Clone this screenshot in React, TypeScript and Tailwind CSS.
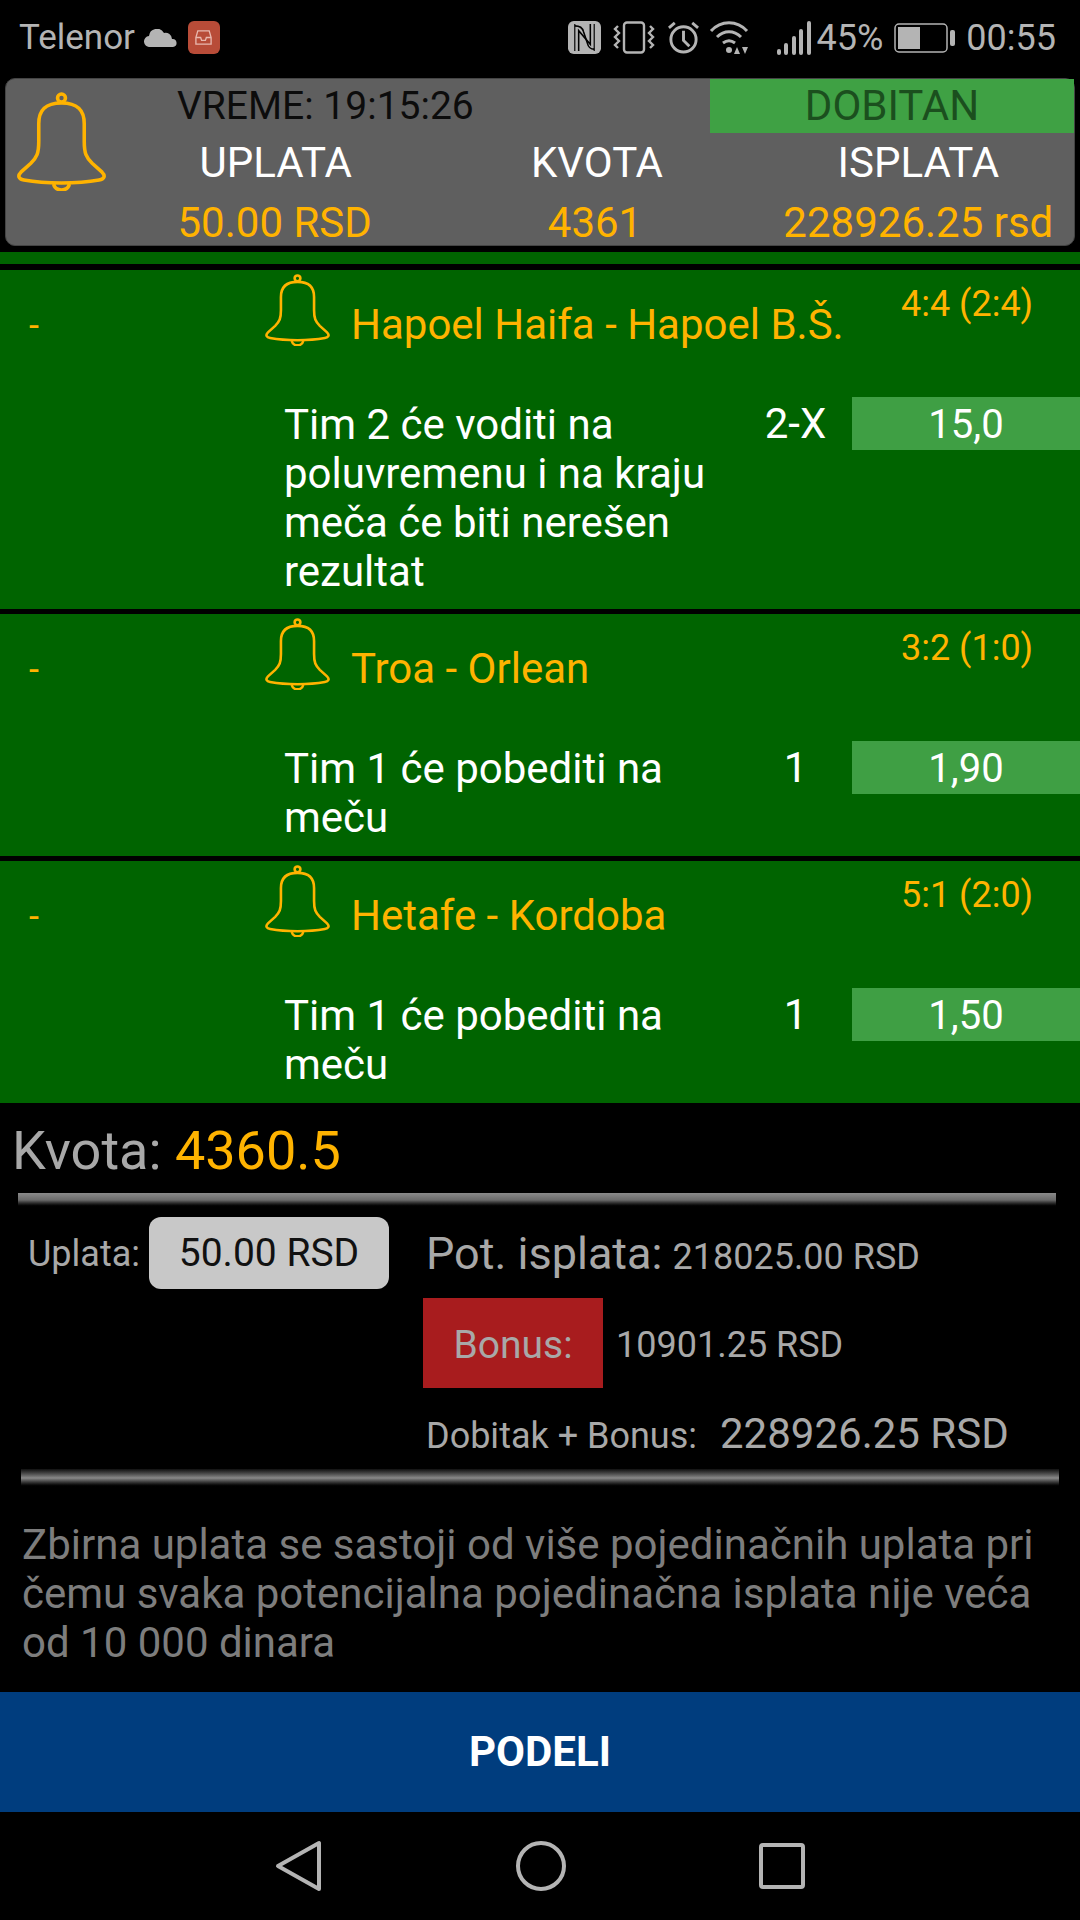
const font = { fontFamily: 'Roboto, sans-serif' };

function Bell({ className }: { className: string }) {
  return (
    <svg viewBox="0 0 90 100" className={className} fill="none" stroke="#ffb300" strokeWidth="3.6">
      <circle cx="45" cy="6" r="4" />
      <path d="M45 11C28 11 22 19 22 32V50C22 62 20 66 14 72L4 81C0 85 2 88 7 89 18 91 32 92 45 92 58 92 72 91 83 89 88 88 90 85 86 81L76 72C70 66 68 62 68 50V32C68 19 62 11 45 11Z" />
      <path d="M37 93c1 4 4 6 8 6s7-2 8-6" />
    </svg>
  );
}

function StatusBar() {
  return (
    <div className="flex items-center h-[75px] pl-[19px] pr-[24px] text-[#b4b4b4]">
      <span className="text-[35px] leading-none">Telenor</span>
      <svg viewBox="0 0 34 18" className="w-[34px] h-[18px] ml-[9px]" fill="#b4b4b4">
        <path d="M6 18a5.5 5.5 0 0 1-1-11 8 8 0 0 1 15-3 6.5 6.5 0 0 1 8 6 4 4 0 0 1 1 8z" />
      </svg>
      <div className="w-[32px] h-[33px] ml-[10px] rounded-[6px] bg-[#b84c38] flex items-center justify-center">
        <svg viewBox="0 0 20 20" className="w-[19px] h-[19px]" fill="none" stroke="#e8b8ae" strokeWidth="1.4">
          <path d="M4 3h12l2 7v7H2v-7z" />
          <path d="M2 10h5l1 3h4l1-3h5" />
        </svg>
      </div>
      <div className="flex-1" />
      <svg viewBox="0 0 34 34" className="w-[33px] h-[33px]">
        <rect width="34" height="34" rx="6" fill="#b4b4b4" />
        <path d="M7 3v28M27 3v28" stroke="#000" strokeWidth="1.2" />
        <path d="M7 5c5 0 8 2 9 6l4 12c1 4 4 6 7 6" fill="none" stroke="#000" strokeWidth="1.6" />
        <path d="M11 31V10l12 14V3" fill="none" stroke="#000" strokeWidth="1.6" />
      </svg>
      <svg viewBox="0 0 42 33" className="w-[42px] h-[33px] ml-[12px]" fill="none" stroke="#b4b4b4" strokeWidth="2.4">
        <rect x="11" y="1.5" width="20" height="30" rx="3" />
        <path d="M5 5l-3 3 4 4-4 4 4 4-4 4 3 3M37 5l3 3-4 4 4 4-4 4 4 4-3 3" />
      </svg>
      <svg viewBox="0 0 34 34" className="w-[33px] h-[33px] ml-[12px]" fill="none" stroke="#b4b4b4" strokeWidth="3">
        <circle cx="17" cy="19" r="13" />
        <path d="M17 10v10l6 6M2 7l6-5M32 7l-6-5" />
      </svg>
      <svg viewBox="0 0 40 33" className="w-[40px] h-[33px] ml-[9px]" fill="none" stroke="#b4b4b4" strokeWidth="3">
        <path d="M2 10c10-11 26-11 36 0M8 16c7-7 17-7 24 0M14 22c4-3 8-3 12 0" />
        <circle cx="20" cy="29" r="3" fill="#b4b4b4" stroke="none" />
        <path d="M25 33h6l-3-7zM33 26h6l-3 7z" fill="#b4b4b4" stroke="none" />
      </svg>
      <svg viewBox="0 0 34 34" className="w-[34px] h-[34px] ml-[28px]" fill="#b4b4b4">
        <rect x="0" y="28" width="4" height="6" rx="2" />
        <rect x="7" y="22" width="4" height="12" rx="2" />
        <rect x="15" y="15" width="4" height="19" rx="2" />
        <rect x="22" y="8" width="4" height="26" rx="2" />
        <rect x="30" y="0" width="4" height="34" rx="2" />
      </svg>
      <span className="text-[36px] leading-none ml-[6px]">45%</span>
      <svg viewBox="0 0 61 30" className="w-[61px] h-[30px] ml-[11px]">
        <rect x="1" y="1" width="52" height="28" rx="4" fill="none" stroke="#b4b4b4" strokeWidth="1.5" />
        <rect x="4" y="4" width="22" height="22" fill="#b4b4b4" />
        <rect x="56" y="7" width="5" height="16" rx="2" fill="#b4b4b4" />
      </svg>
      <span className="text-[36px] leading-none ml-[11px]">00:55</span>
    </div>
  );
}

function Summary() {
  return (
    <div className="mx-[5px] h-[168px] rounded-[10px] border border-[#444] bg-[#5f5f5f] flex mt-[3px]">
      <div className="w-[110px] shrink-0 pl-[11px] pt-[13px]">
        <Bell className="w-[89px] h-[99px]" />
      </div>
      <div className="flex-1 min-w-0">
        <div className="flex h-[54px]">
          <div className="flex-1 pl-[61px] pt-[7px] text-[39px] leading-[40px] text-[#0c0c0c] whitespace-nowrap">VREME: 19:15:26</div>
          <div className="w-[364px] bg-[#3fa144] text-[#1b4f1e] text-[42px] leading-[54px] text-center">DOBITAN</div>
        </div>
        <div className="grid grid-cols-3 text-[42px] leading-[44px] text-white text-center mt-[8px]">
          <div>UPLATA</div>
          <div className="pl-[4px]">KVOTA</div>
          <div className="pl-[8px]">ISPLATA</div>
        </div>
        <div className="grid grid-cols-3 text-[42px] leading-[44px] text-[#ffb300] text-center mt-[16px]">
          <div className="pr-[2px]">50.00 RSD</div>
          <div>4361</div>
          <div className="whitespace-nowrap pl-[8px]">228926.25 rsd</div>
        </div>
      </div>
    </div>
  );
}

function Match({
  title,
  score,
  lines,
  pick,
  odds,
  height,
}: {
  title: string;
  score: string;
  lines: string[];
  pick: string;
  odds: string;
  height: string;
}) {
  return (
    <div className={`bg-[#006400] ${height}`}>
      <div className="flex h-[127px]">
        <div className="w-[265px] shrink-0 pl-[29px] pt-[36px] text-[#ffb300] text-[36px] leading-[40px]">-</div>
        <div className="w-[86px] shrink-0 pt-[4px]">
          <Bell className="w-[65px] h-[72px]" />
        </div>
        <div className="w-[498px] shrink-0 pt-[30px] text-[#ffb300] text-[42px] leading-[50px] whitespace-nowrap">{title}</div>
        <div className="pt-[14px] pl-[52px] text-[#ffb300] text-[36px] leading-[40px] whitespace-nowrap">{score}</div>
      </div>
      <div className="flex">
        <div className="w-[284px] shrink-0" />
        <div className="w-[441px] shrink-0 pt-[3px] text-white text-[42px] leading-[49px]">
          {lines.map((l) => (
            <div key={l} className="whitespace-nowrap">{l}</div>
          ))}
        </div>
        <div className="w-[127px] shrink-0 text-white text-[42px] leading-[53px] text-center pl-[14px]">{pick}</div>
        <div className="flex-1 h-[53px] bg-[#3f9f44] text-white text-[40px] leading-[56px] text-center">{odds}</div>
      </div>
    </div>
  );
}

export default function App() {
  return (
    <div className="w-[1080px] h-[1920px] bg-black overflow-hidden" style={font}>
      <StatusBar />
      <Summary />
      <div className="h-[12px] bg-[#006400] mt-[6px]" />
      <div className="flex flex-col gap-[5px] mt-[6px]">
        <Match
          title="Hapoel Haifa - Hapoel B.Š."
          score="4:4 (2:4)"
          lines={['Tim 2 će voditi na', 'poluvremenu i na kraju', 'meča će biti nerešen', 'rezultat']}
          pick="2-X"
          odds="15,0"
          height="h-[339px]"
        />
        <Match
          title="Troa - Orlean"
          score="3:2 (1:0)"
          lines={['Tim 1 će pobediti na', 'meču']}
          pick="1"
          odds="1,90"
          height="h-[242px]"
        />
        <Match
          title="Hetafe - Kordoba"
          score="5:1 (2:0)"
          lines={['Tim 1 će pobediti na', 'meču']}
          pick="1"
          odds="1,50"
          height="h-[242px]"
        />
      </div>

      <div className="pl-[12px] pt-[18px] text-[54px] leading-[60px] text-[#a8a8a8]">
        Kvota: <span className="text-[#ffb300]">4360.5</span>
      </div>
      <div className="ml-[18px] w-[1038px] h-[14px] mt-[12px] bg-gradient-to-b from-[#8a8a8a] via-[#6a6a6a] to-[#000]" />

      <div className="flex mt-[10px]">
        <div className="w-[423px] shrink-0 flex items-start pl-[28px]">
          <span className="w-[121px] text-[36px] leading-[74px] text-[#a8a8a8]">Uplata:</span>
          <div className="w-[240px] h-[72px] rounded-[12px] bg-[#c8c8c8] text-[#111] text-[39px] leading-[72px] text-center">
            50.00 RSD
          </div>
        </div>
        <div className="flex-1 text-[#a8a8a8]">
          <div className="flex items-baseline pl-[3px] h-[72px] pt-[7px]">
            <span className="text-[45px] leading-[60px]">Pot. isplata:</span>
            <span className="text-[36px] leading-[60px] ml-[10px]">218025.00 RSD</span>
          </div>
          <div className="flex items-start h-[90px] mt-[9px]">
            <div className="w-[180px] h-[90px] bg-[#a81c1e] text-[39px] leading-[94px] text-center">Bonus:</div>
            <span className="text-[36px] leading-[94px] ml-[13px]">10901.25 RSD</span>
          </div>
          <div className="flex items-baseline pl-[3px] h-[60px] mt-[16px]">
            <span className="text-[36px] leading-[60px]">Dobitak + Bonus:</span>
            <span className="text-[42px] leading-[60px] ml-[23px]">228926.25 RSD</span>
          </div>
        </div>
      </div>
      <div className="ml-[21px] w-[1038px] h-[18px] mt-[5px] bg-gradient-to-b from-[#111] via-[#8a8a8a] to-[#000]" />

      <div className="pl-[22px] pt-[33px] text-[42px] leading-[49px] text-[#7d7d7d] whitespace-nowrap">
        <div>Zbirna uplata se sastoji od više pojedinačnih uplata pri</div>
        <div>čemu svaka potencijalna pojedinačna isplata nije veća</div>
        <div>od 10 000 dinara</div>
      </div>

      <div className="mt-[25px] h-[120px] bg-[#003d7e] text-white text-[42px] font-bold leading-[120px] text-center">
        PODELI
      </div>

      <div className="flex h-[108px] items-center justify-center gap-[192px]">
        <svg viewBox="0 0 48 52" className="w-[48px] h-[52px]" fill="none" stroke="#b4b4b4" strokeWidth="4" strokeLinejoin="round">
          <path d="M44 3v46L3 26z" />
        </svg>
        <svg viewBox="0 0 52 52" className="w-[52px] h-[52px]" fill="none" stroke="#b4b4b4" strokeWidth="4">
          <circle cx="26" cy="26" r="23" />
        </svg>
        <svg viewBox="0 0 46 46" className="w-[46px] h-[46px]" fill="none" stroke="#b4b4b4" strokeWidth="4">
          <rect x="2" y="2" width="42" height="42" rx="2" />
        </svg>
      </div>
    </div>
  );
}
